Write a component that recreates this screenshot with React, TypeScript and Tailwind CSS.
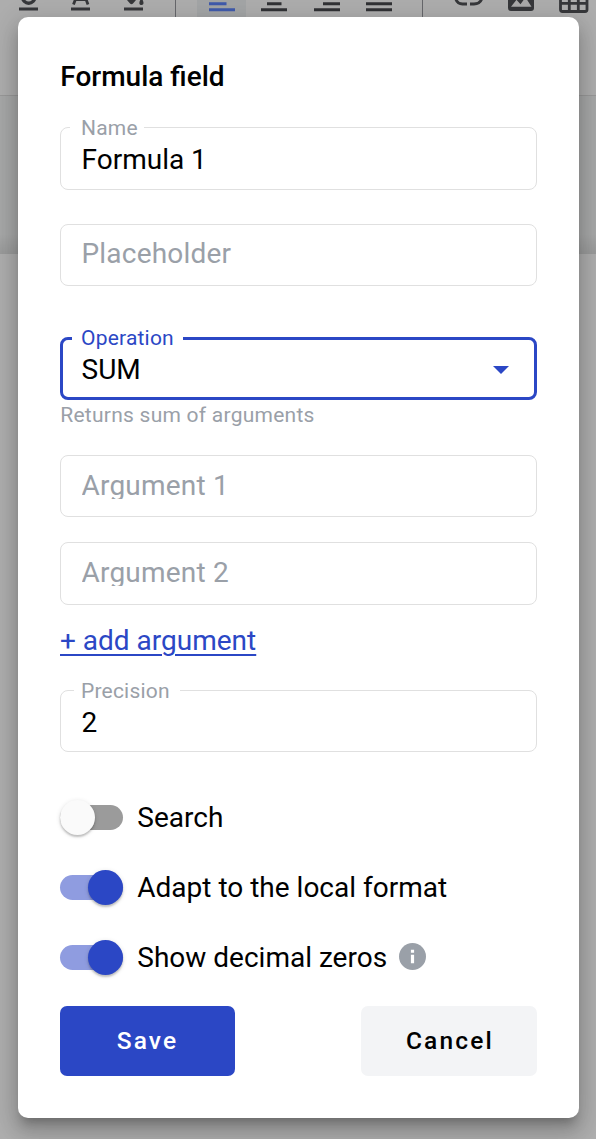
import type { ReactNode } from "react";

function Toolbar() {
  return (
    <svg className="block h-[17px] w-full" viewBox="0 0 596 17" fill="none">
      <path d="M197 0h49v17h-49z" fill="#a3a5a6" />
      <path d="M22.500 -5v2a6.200 6.200 0 0 0 12.400 0v-2" stroke="#36373a" strokeWidth="3.400" />
      <path d="M73.500 4.500L79 -10h3.500L88 4.500M76 -0.500h9.500" stroke="#36373a" strokeWidth="2.800" />
      <path d="M19 9h19M71 9h19M124 9h19" stroke="#36373a" strokeWidth="3" />
      <path d="M124 -3.500l6 7q1.500 1.400 3 0l6-7z" fill="#36373a" />
      <path d="M141.500 -2c-3 4-2.700 7 0 7s2.700-3 0-7z" fill="#36373a" />
      <path d="M175.500 0v17M422.500 0v17" stroke="#66676b" />
      <path d="M209 3.800h17.500M209 9.700h26" stroke="#3f5aab" strokeWidth="3" />
      <path d="M267 3.800h14.500M261 9.700h26M323 3.800h17M314 9.700h26M366 3.800h26M366 9.700h26" stroke="#303134" strokeWidth="3" />
      <path d="M455.500 -2c1 4.500 3.500 6 7 6h4.500M470 4h4c4 0 7-2 8-6" stroke="#36373a" strokeWidth="2.800" />
      <rect x="508" y="-15" width="26" height="26" rx="3" fill="#36373a" />
      <path d="M511 6.800l5.500-7 4 4.500 5-7 6 9.500z" fill="#a9a9a9" />
      <path d="M560.500 -8V9.500q0 2 2 2h22.500q2 0 2-2V-8M560 3.300h27M569.300 0v11M578.300 0v11" stroke="#36373a" strokeWidth="2.800" />
    </svg>
  );
}

interface FieldProps {
  className: string;
  labelClass?: string;
  label?: string;
  children: ReactNode;
}

function Field({ className, label, labelClass = "", children }: FieldProps) {
  return (
    <div className={`relative flex shrink-0 items-center rounded-[8px] ${className}`}>
      {label && (
        <span className={`absolute bg-white text-[21px] leading-[24px] tracking-[0.2px] ${labelClass}`}>{label}</span>
      )}
      {children}
    </div>
  );
}

function Toggle({ on, label, children }: { on: boolean; label: string; children?: ReactNode }) {
  return (
    <div className="flex h-[35px] items-center">
      <span
        className={`flex h-[25px] w-[63px] shrink-0 items-center rounded-full ${on ? "justify-end bg-[#8f9ce0]" : "justify-start bg-[#9b9b9b]"}`}
      >
        <span
          className={`size-[35px] shrink-0 rounded-full shadow-[0_2px_2px_rgba(0,0,0,0.2),0_1px_5px_rgba(0,0,0,0.12)] ${on ? "bg-[#2b47c5]" : "bg-[#fafafa]"}`}
        />
      </span>
      <span className="ml-[14.3px] whitespace-nowrap">{label}</span>
      {children}
    </div>
  );
}

export default function App() {
  return (
    <div className="relative flex h-[1139px] w-[596px] flex-col overflow-hidden bg-[#adadad] font-[Roboto,sans-serif]">
      <div className="h-[96px] shrink-0 border-b border-[#989898]">
        <Toolbar />
      </div>
      <div className="flex h-[158px] shrink-0 flex-col justify-end bg-[#a6a7a7]">
        <div className="h-[20px] bg-linear-to-b from-transparent to-black/8" />
      </div>

      <div className="absolute top-[17px] left-[18px] flex h-[1101px] w-[561px] flex-col rounded-[10px] bg-white px-[42px] pt-[43px] text-[28px] leading-[34px] text-black shadow-[0_9px_9px_-5px_rgba(0,0,0,0.2),0_14px_18px_2px_rgba(0,0,0,0.14),0_5px_25px_4px_rgba(0,0,0,0.12)]">
        <h1 className="pl-[0.3px] font-medium">Formula field</h1>

        <Field
          className="mt-[33px] h-[63px] border border-[#e0e0e0] px-[20.5px] pt-[2px]"
          label="Name"
          labelClass="-top-[12px] left-[9px] w-[74px] pl-[11px] text-[#9aa0a8]"
        >
          <span>Formula 1</span>
        </Field>

        <Field className="mt-[34px] h-[62px] border border-[#e0e0e0] px-[20.5px] pb-[3px] text-[#9aa0a8]">
          <span className="tracking-[0.2px]">Placeholder</span>
        </Field>

        <Field
          className="mt-[51px] h-[63px] justify-between border-3 border-[#2b47c5] pr-[25px] pl-[18.5px] pt-[2px]"
          label="Operation"
          labelClass="-top-[14px] left-[9px] w-[111px] pl-[9px] text-[#2b47c5]"
        >
          <span>SUM</span>
          <svg className="h-[8px] w-[16px]" viewBox="0 0 16 8">
            <path d="M0 0h16L8 8z" fill="#2b47c5" />
          </svg>
        </Field>
        <p className="mt-[3px] pl-[0.3px] text-[21px] leading-[24px] tracking-[0.25px] text-[#9aa0a8]">Returns sum of arguments</p>

        <Field className="mt-[28px] h-[62px] border border-[#e0e0e0] px-[20.5px] pb-[2px] text-[#9aa0a8]">
          <span className="h-[28px] overflow-hidden leading-[30px] tracking-[0.2px]">Argument 1</span>
        </Field>
        <Field className="mt-[25px] h-[63px] border border-[#e0e0e0] px-[20.5px] pb-[3px] text-[#9aa0a8]">
          <span className="h-[28px] overflow-hidden leading-[30px] tracking-[0.2px]">Argument 2</span>
        </Field>

        <a className="mt-[19px] self-start text-[#2b47c5] underline decoration-2 underline-offset-[4px]">
          + add argument
        </a>

        <Field
          className="mt-[32px] h-[62px] border border-[#e0e0e0] px-[20.5px] pt-[3px]"
          label="Precision"
          labelClass="-top-[12px] left-[13px] w-[106px] pl-[7px] text-[#9aa0a8]"
        >
          <span>2</span>
        </Field>

        <div className="mt-[48px] flex flex-col gap-[35px]">
          <Toggle on={false} label="Search" />
          <Toggle on label="Adapt to the local format" />
          <Toggle on label="Show decimal zeros">
            <svg className="mb-px ml-[12.300px] size-[28px] shrink-0" viewBox="0 0 28 28">
              <circle cx="13.500" cy="13.500" r="13.500" fill="#9aa0a8" />
              <path d="M11.900 6.800h3.200v3h-3.200zM11.900 11.800h3.200v8.500h-3.200z" fill="white" />
            </svg>
          </Toggle>
        </div>

        <div className="mt-[31px] flex justify-between text-[24.5px] font-medium tracking-[2.19px]">
          <button className="h-[70px] w-[175px] rounded-[7px] bg-[#2b47c5] text-white">Save</button>
          <button className="h-[70px] w-[176px] rounded-[7px] bg-[#f3f4f6] pl-[2px]">Cancel</button>
        </div>
      </div>
    </div>
  );
}
